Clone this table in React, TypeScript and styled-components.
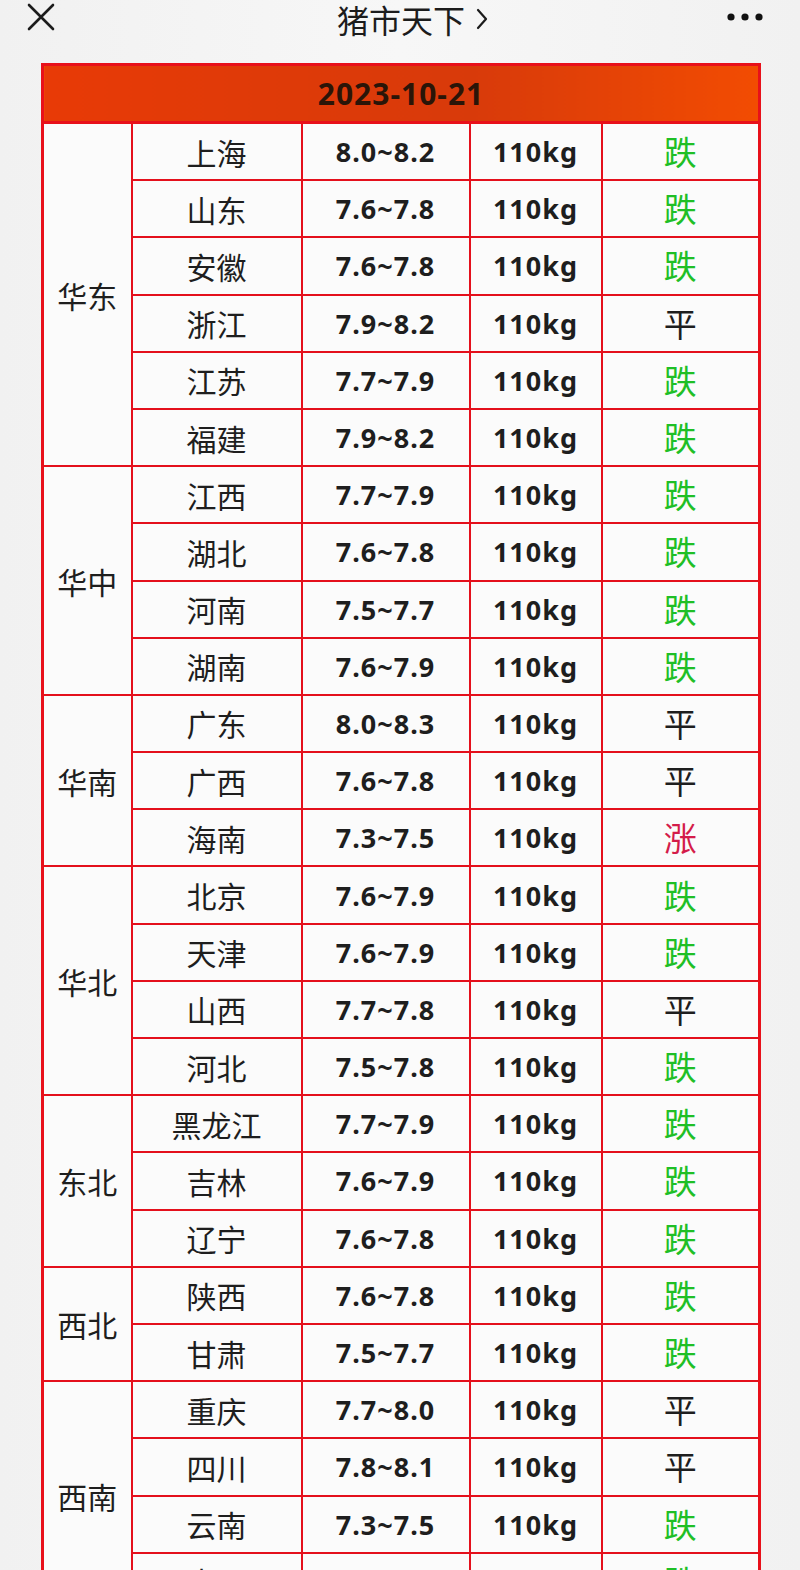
import React from "react";
import styled, { createGlobalStyle } from "styled-components";

const GlobalStyle = createGlobalStyle`
  html, body { margin: 0; padding: 0; background: #f4f4f4; }
  body { font-family: "Noto Sans", "Noto Sans CJK SC", sans-serif; color: #1e1e1e; }
`;

const Page = styled.div`
  width: 800px;
  height: 1570px;
  overflow: hidden;
  background: linear-gradient(90deg, #f1f1f1 0%, #f7f7f7 50%, #f1f1f1 100%);
`;

const TopBar = styled.div`
  height: 38px;
  display: flex;
  align-items: center;
  justify-content: space-between;
  padding: 0 36px 0 26px;
`;

const Title = styled.div`
  font-family: "Noto Sans CJK SC", sans-serif;
  font-size: 32px;
  color: #1c1c1c;
  display: flex;
  align-items: center;
  gap: 10px;
  margin-left: 44px;
  line-height: 36px;
`;

const IconBox = styled.div`
  display: flex;
  align-items: center;
  margin-top: -4px;
`;

const TableWrap = styled.div`
  margin: 25px 0 0 41px;
  width: 717px;
`;

const Table = styled.table`
  border-collapse: collapse;
  width: 717px;
  table-layout: fixed;
  border: 3px solid #e8101a;
`;

const HeadCell = styled.th`
  height: 55px;
  padding: 0;
  background: linear-gradient(90deg, #e83a06 0%, #df3a08 30%, #d83a0a 60%, #f24c02 100%);
  border: 3px solid #e8101a;
  font-family: "Noto Sans", sans-serif;
  font-weight: 700;
  font-size: 30px;
  color: #2a1508;
  letter-spacing: 1px;
  text-align: center;
`;

const Cell = styled.td<{ $kind?: "name" | "num" | "status"; $tone?: string }>`
  height: 55.2px;
  padding: 0;
  border: 2px solid #e4101c;
  background: #fbfbfb;
  text-align: center;
  vertical-align: middle;
  line-height: 1;
  color: ${(p) => p.$tone ?? "#1e1e1e"};
  font-family: ${(p) =>
    p.$kind === "num" ? `"Noto Sans", sans-serif` : `"Noto Sans CJK SC", sans-serif`};
  font-weight: ${(p) => (p.$kind === "num" ? 700 : 400)};
  font-size: ${(p) => (p.$kind === "num" ? "27px" : p.$kind === "status" ? "33px" : "30px")};
  letter-spacing: ${(p) => (p.$kind === "num" ? "1px" : "0")};
`;

const RegionCell = styled.td`
  padding: 0;
  border: 2px solid #e4101c;
  background: #fbfbfb;
  text-align: center;
  vertical-align: middle;
  font-family: "Noto Sans CJK SC", sans-serif;
  font-size: 30px;
  color: #1e1e1e;
`;

type Row = [string, string, string];
const groups: { region: string; rows: Row[] }[] = [
  {
    region: "华东",
    rows: [
      ["上海", "8.0~8.2", "跌"],
      ["山东", "7.6~7.8", "跌"],
      ["安徽", "7.6~7.8", "跌"],
      ["浙江", "7.9~8.2", "平"],
      ["江苏", "7.7~7.9", "跌"],
      ["福建", "7.9~8.2", "跌"],
    ],
  },
  {
    region: "华中",
    rows: [
      ["江西", "7.7~7.9", "跌"],
      ["湖北", "7.6~7.8", "跌"],
      ["河南", "7.5~7.7", "跌"],
      ["湖南", "7.6~7.9", "跌"],
    ],
  },
  {
    region: "华南",
    rows: [
      ["广东", "8.0~8.3", "平"],
      ["广西", "7.6~7.8", "平"],
      ["海南", "7.3~7.5", "涨"],
    ],
  },
  {
    region: "华北",
    rows: [
      ["北京", "7.6~7.9", "跌"],
      ["天津", "7.6~7.9", "跌"],
      ["山西", "7.7~7.8", "平"],
      ["河北", "7.5~7.8", "跌"],
    ],
  },
  {
    region: "东北",
    rows: [
      ["黑龙江", "7.7~7.9", "跌"],
      ["吉林", "7.6~7.9", "跌"],
      ["辽宁", "7.6~7.8", "跌"],
    ],
  },
  {
    region: "西北",
    rows: [
      ["陕西", "7.6~7.8", "跌"],
      ["甘肃", "7.5~7.7", "跌"],
    ],
  },
  {
    region: "西南",
    rows: [
      ["重庆", "7.7~8.0", "平"],
      ["四川", "7.8~8.1", "平"],
      ["云南", "7.3~7.5", "跌"],
      ["贵州", "7.6~7.9", "跌"],
    ],
  },
];

const toneOf = (s: string) => (s === "跌" ? "#1fbf26" : s === "涨" ? "#d41c4a" : "#1e1e1e");

const CloseIcon = () => (
  <svg width="30" height="28" viewBox="0 0 30 28">
    <path d="M3 2 L27 26 M27 2 L3 26" stroke="#1c1c1c" strokeWidth="2.6" strokeLinecap="round" />
  </svg>
);

const Chevron = () => (
  <svg width="14" height="24" viewBox="0 0 14 24">
    <path d="M3 3 L11 12 L3 21" stroke="#1c1c1c" strokeWidth="2.2" fill="none" strokeLinecap="round" strokeLinejoin="round" />
  </svg>
);

const MoreIcon = () => (
  <svg width="38" height="10" viewBox="0 0 38 10">
    <circle cx="5" cy="5" r="3.6" fill="#111" />
    <circle cx="19" cy="5" r="3.6" fill="#111" />
    <circle cx="33" cy="5" r="3.6" fill="#111" />
  </svg>
);

export default function App() {
  return (
    <Page>
      <GlobalStyle />
      <TopBar>
        <IconBox>
          <CloseIcon />
        </IconBox>
        <Title>
          猪市天下
          <Chevron />
        </Title>
        <IconBox>
          <MoreIcon />
        </IconBox>
      </TopBar>
      <TableWrap>
        <Table>
          <colgroup>
            <col style={{ width: 89 }} />
            <col style={{ width: 170 }} />
            <col style={{ width: 168 }} />
            <col style={{ width: 132 }} />
            <col style={{ width: 158 }} />
          </colgroup>
          <thead>
            <tr>
              <HeadCell colSpan={5}>2023-10-21</HeadCell>
            </tr>
          </thead>
          <tbody>
            {groups.map((g) =>
              g.rows.map((r, i) => (
                <tr key={g.region + r[0]}>
                  {i === 0 && <RegionCell rowSpan={g.rows.length}>{g.region}</RegionCell>}
                  <Cell $kind="name">{r[0]}</Cell>
                  <Cell $kind="num">{r[1]}</Cell>
                  <Cell $kind="num">110kg</Cell>
                  <Cell $kind="status" $tone={toneOf(r[2])}>
                    {r[2]}
                  </Cell>
                </tr>
              ))
            )}
          </tbody>
        </Table>
      </TableWrap>
    </Page>
  );
}
